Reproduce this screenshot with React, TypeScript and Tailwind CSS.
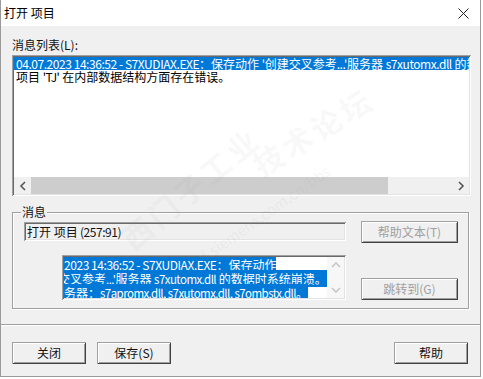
import React from "react";

const sunken =
  "shadow-[inset_1px_1px_0_#a0a0a0,inset_-1px_-1px_0_#ffffff,inset_2px_2px_0_#696969,inset_-2px_-2px_0_#e3e3e3]";
const raised =
  "shadow-[inset_1px_1px_0_#a0a0a0,inset_-1px_-1px_0_#404040,inset_2px_2px_0_#ffffff,inset_-2px_-2px_0_#a0a0a0]";

function L({ children }: { children: React.ReactNode }) {
  return <span className="tracking-[-0.45px]">{children}</span>;
}

function LS({ children }: { children: React.ReactNode }) {
  return <span className="text-[11.5px] tracking-[-0.55px]">{children}</span>;
}

function Btn({ label, disabled, className }: { label: string; disabled?: boolean; className?: string }) {
  return (
    <div
      className={`h-[22px] flex items-center justify-center bg-[#f0f0f0] text-[12px] ${raised} ${
        disabled ? "text-[#a0a0a0]" : "text-[#111]"
      } ${className ?? ""}`}
    >
      {label}
    </div>
  );
}

export default function App() {
  return (
    <div className="w-[483px] h-[379px] bg-white relative overflow-hidden font-['Noto_Sans_CJK_SC','Microsoft_YaHei',sans-serif] text-[12px] leading-[14px] text-[#111]">
      <div className="w-[481px] h-[377px] bg-[#f0f0f0] border-r border-b border-l border-[#9a9a9a] flex flex-col">
        {/* title bar */}
        <div className="h-[26px] bg-white flex items-center justify-between pl-[3px] pr-[10px] shrink-0">
          <span className="text-[12px] text-black">打开 项目</span>
          <svg width="11" height="11" viewBox="0 0 11 11" className="mr-[1px]">
            <path d="M0.5 0.5 L10.5 10.5 M10.5 0.5 L0.5 10.5" stroke="#222" strokeWidth="1" />
          </svg>
        </div>

        <div className="flex flex-col px-[11px] pt-[12px]">
          <div className="h-[14px] leading-[14px]">消息列表(L):</div>

          {/* list box */}
          <div className={`mt-[3px] w-[459px] h-[141px] bg-white ${sunken} p-[2px] flex flex-col`}>
            <div className="flex-1 overflow-hidden">
              <div className="h-[13px] bg-[#0078d7] text-white leading-[13px] whitespace-nowrap overflow-hidden pl-[2px]">
                <L>04.07.2023 14:36:52 - S7XUDIAX.EXE</L>：保存动作 <L>'</L>创建交叉参考<L>...'</L>服务器 <L>s7xutomx.dll</L> 的数据时系统崩溃。服务器：<L>s7apromx.dll, s7xutomx.dll, s7ombstx.dll</L>。
              </div>
              <div className="h-[13px] leading-[13px] whitespace-nowrap pl-[2px] text-black">
                项目 <L>'TJ'</L> 在内部数据结构方面存在错误。
              </div>
            </div>
            {/* horizontal scrollbar */}
            <div className="h-[17px] flex bg-[#f0f0f0] shrink-0">
              <div className="w-[17px] flex items-center justify-center">
                <svg width="8" height="10" viewBox="0 0 8 10">
                  <path d="M6 1 L2 5 L6 9" stroke="#555" strokeWidth="1.6" fill="none" />
                </svg>
              </div>
              <div className="w-[357px] h-full bg-[#cdcdcd]" />
              <div className="flex-1" />
              <div className="w-[17px] flex items-center justify-center">
                <svg width="8" height="10" viewBox="0 0 8 10">
                  <path d="M2 1 L6 5 L2 9" stroke="#555" strokeWidth="1.6" fill="none" />
                </svg>
              </div>
            </div>
          </div>

          {/* group box */}
          <div className="relative mt-[16px] w-[457px] h-[97px] border border-[#a0a0a0] shadow-[1px_1px_0_#ffffff,inset_1px_1px_0_#ffffff] flex">
            <span className="absolute -top-[8px] left-[8px] px-[1px] bg-[#f0f0f0] leading-[14px]">消息</span>
            <div className="flex flex-col pl-[11px] pt-[9px]">
              <div className={`w-[322px] h-[19px] bg-[#f0f0f0] ${sunken} flex items-center pl-[3px] whitespace-nowrap`}>
                打开 项目 <L>&nbsp;(257:91)</L>
              </div>
              <div className={`ml-[38px] mt-[14px] w-[284px] h-[45px] bg-white ${sunken} p-[2px] flex`}>
                <div className="flex-1 overflow-hidden pt-[1px] leading-[14px] text-white whitespace-nowrap">
                  <div className="h-[14px]">
                    <span className="bg-[#0078d7]">
                      <L>2023 14:36:52 - S7XUDIAX.EXE</L>：保存动作
                    </span>
                  </div>
                  <div className="h-[14px] -ml-[6px]">
                    <span className="bg-[#0078d7]">
                      交叉参考<LS>...'</LS>服务器 <LS>s7xutomx.dll</LS> 的数据时系统崩溃。
                    </span>
                  </div>
                  <div className="h-[14px]">
                    <span className="bg-[#0078d7]">
                      务器：<LS>s7apromx.dll, s7xutomx.dll, s7ombstx.dll</LS>。
                    </span>
                  </div>
                </div>
                <div className="w-[17px] flex flex-col justify-between items-center py-[4px] bg-[#f7f7f7]">
                  <svg width="10" height="8" viewBox="0 0 10 8">
                    <path d="M1 6 L5 2 L9 6" stroke="#c2c2c2" strokeWidth="1.4" fill="none" />
                  </svg>
                  <svg width="10" height="8" viewBox="0 0 10 8">
                    <path d="M1 2 L5 6 L9 2" stroke="#c2c2c2" strokeWidth="1.4" fill="none" />
                  </svg>
                </div>
              </div>
            </div>
            <div className="flex flex-col ml-[15px] pt-[8px]">
              <Btn label="帮助文本(T)" disabled className="w-[97px]" />
              <Btn label="跳转到(G)" disabled className="w-[97px] mt-[35px]" />
            </div>
          </div>
        </div>

        {/* separator */}
        <div className="mt-[15px] h-[2px] border-t border-[#a0a0a0] border-b border-b-white" />

        {/* bottom buttons */}
        <div className="mt-[16px] flex px-[11px]">
          <Btn label="关闭" className="w-[74px]" />
          <Btn label="保存(S)" className="w-[74px] ml-[11px]" />
          <div className="flex-1" />
          <Btn label="帮助" className="w-[74px] mr-[1px]" />
        </div>
      </div>

      {/* watermark */}
      <div className="absolute left-[125px] top-[235px] -rotate-[40deg] origin-left pointer-events-none text-[30px] font-bold text-[rgba(150,150,150,0.08)] tracking-[4px] whitespace-nowrap">
        西门子工业
      </div>
      <div className="absolute left-[255px] top-[160px] -rotate-[32deg] origin-left pointer-events-none text-[30px] font-bold text-[rgba(150,150,150,0.08)] tracking-[4px] whitespace-nowrap">
        技术论坛
      </div>
      <div className="absolute left-[160px] top-[280px] -rotate-[35deg] origin-left pointer-events-none text-[15px] text-[rgba(150,150,150,0.1)] whitespace-nowrap">
        www.ad.siemens.com.cn/bbs
      </div>
    </div>
  );
}
